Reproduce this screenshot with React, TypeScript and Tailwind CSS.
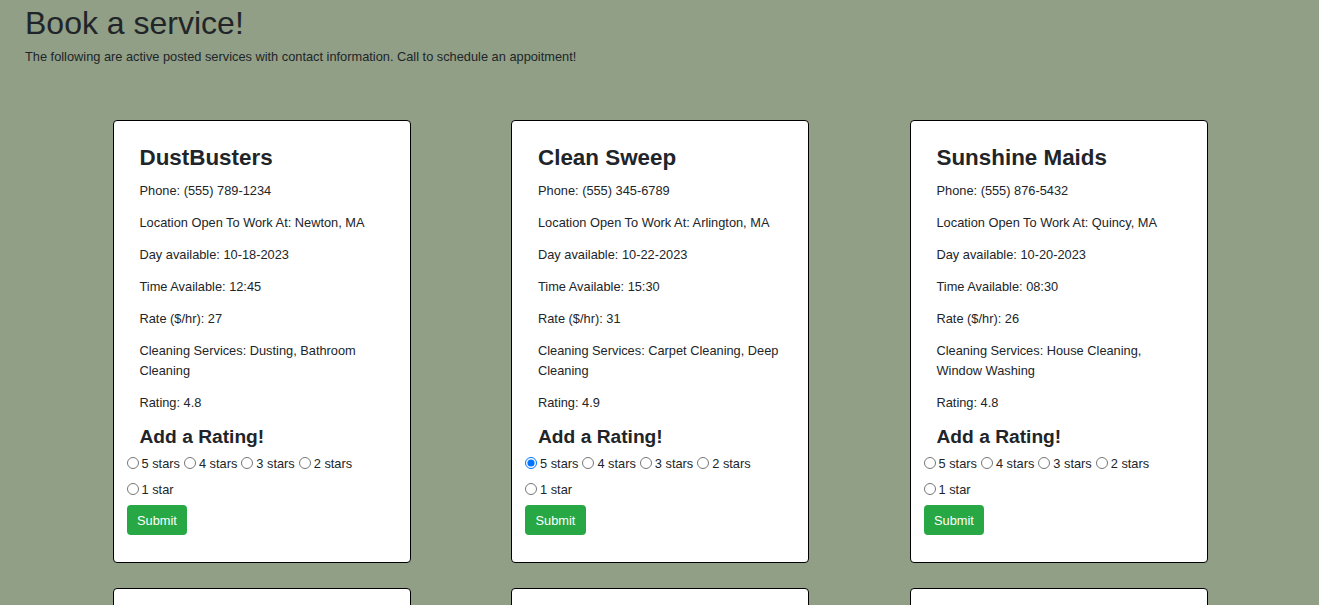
import { useState } from 'react';

type Service = {
  name: string;
  phone: string;
  location: string;
  day: string;
  time: string;
  rate: number;
  cleaning: string;
  rating: string;
};

const services: Service[] = [
  {
    name: 'DustBusters',
    phone: '(555) 789-1234',
    location: 'Newton, MA',
    day: '10-18-2023',
    time: '12:45',
    rate: 27,
    cleaning: 'Dusting, Bathroom Cleaning',
    rating: '4.8',
  },
  {
    name: 'Clean Sweep',
    phone: '(555) 345-6789',
    location: 'Arlington, MA',
    day: '10-22-2023',
    time: '15:30',
    rate: 31,
    cleaning: 'Carpet Cleaning, Deep Cleaning',
    rating: '4.9',
  },
  {
    name: 'Sunshine Maids',
    phone: '(555) 876-5432',
    location: 'Quincy, MA',
    day: '10-20-2023',
    time: '08:30',
    rate: 26,
    cleaning: 'House Cleaning, Window Washing',
    rating: '4.8',
  },
  {
    name: 'Sparkle Pros',
    phone: '(555) 234-5678',
    location: 'Cambridge, MA',
    day: '10-25-2023',
    time: '09:00',
    rate: 29,
    cleaning: 'Kitchen Cleaning, Laundry',
    rating: '4.7',
  },
  {
    name: 'Fresh Start',
    phone: '(555) 456-7890',
    location: 'Somerville, MA',
    day: '10-19-2023',
    time: '10:15',
    rate: 25,
    cleaning: 'Move-out Cleaning',
    rating: '4.6',
  },
  {
    name: 'Tidy Home',
    phone: '(555) 567-8901',
    location: 'Brookline, MA',
    day: '10-21-2023',
    time: '14:00',
    rate: 30,
    cleaning: 'Office Cleaning, Dusting',
    rating: '4.9',
  },
];

const starOptions = ['5 stars', '4 stars', '3 stars', '2 stars', '1 star'];

const ServiceCard = ({ service, index }: { service: Service; index: number }) => {
  // second card shows a pre-selected rating
  const [choice, setChoice] = useState(index === 1 ? '5 stars' : '');

  return (
    <div className="bg-white border border-black rounded-[4px] px-[13px] pt-[13px] pb-[27px]">
      <div className="px-[13px]">
        <h2 className="mt-[11px] mb-[10px] text-[22.4px] leading-[1.2] font-bold">{service.name}</h2>
        <p className="mb-[12.8px] leading-[19.2px]">Phone: {service.phone}</p>
        <p className="mb-[12.8px] leading-[19.2px]">Location Open To Work At: {service.location}</p>
        <p className="mb-[12.8px] leading-[19.2px]">Day available: {service.day}</p>
        <p className="mb-[12.8px] leading-[19.2px]">Time Available: {service.time}</p>
        <p className="mb-[12.8px] leading-[19.2px]">Rate ($/hr): {service.rate}</p>
        <p className="mb-[12.8px] leading-[19.2px]">Cleaning Services: {service.cleaning}</p>
        <p className="mb-[12.8px] leading-[19.2px]">Rating: {service.rating}</p>
        <h3 className="mb-[2.4px] text-[19.2px] leading-[1.2] font-bold">Add a Rating!</h3>
      </div>
      <form onSubmit={(e) => e.preventDefault()}>
        <div className="flex flex-wrap gap-x-[4px]">
          {starOptions.map((opt) => (
            <label key={opt} className="h-[26px] flex items-center">
              <input
                type="radio"
                name={`rating-${index}`}
                value={opt}
                checked={choice === opt}
                onChange={() => setChoice(opt)}
                className="m-0 w-[12px] h-[12px]"
              />
              <span className="ml-[3px]">{opt}</span>
            </label>
          ))}
        </div>
        <button
          type="submit"
          className="mt-[3px] h-[30px] px-[10.5px] rounded-[4px] bg-[#28a745] text-white text-[12.8px]"
        >
          Submit
        </button>
      </form>
    </div>
  );
};

export default function App() {
  return (
    <div className="min-h-screen bg-[#909f86] text-[#212529] text-[12.8px] font-['Liberation_Sans',Arial,sans-serif]">
      <div className="px-[25px]">
        <h1 className="pt-[4px] mb-[5px] text-[32px] leading-[1.2]">Book a service!</h1>
        <p className="text-[12.8px] leading-[19.2px]">
          The following are active posted services with contact information. Call to schedule an appoitment!
        </p>
      </div>
      <div className="mt-[53px] pl-[1px] grid grid-cols-[298px_298px_298px] justify-center gap-x-[100.5px] gap-y-[25px] pb-[40px]">
        {services.map((s, i) => (
          <ServiceCard key={s.name} service={s} index={i} />
        ))}
      </div>
    </div>
  );
}
